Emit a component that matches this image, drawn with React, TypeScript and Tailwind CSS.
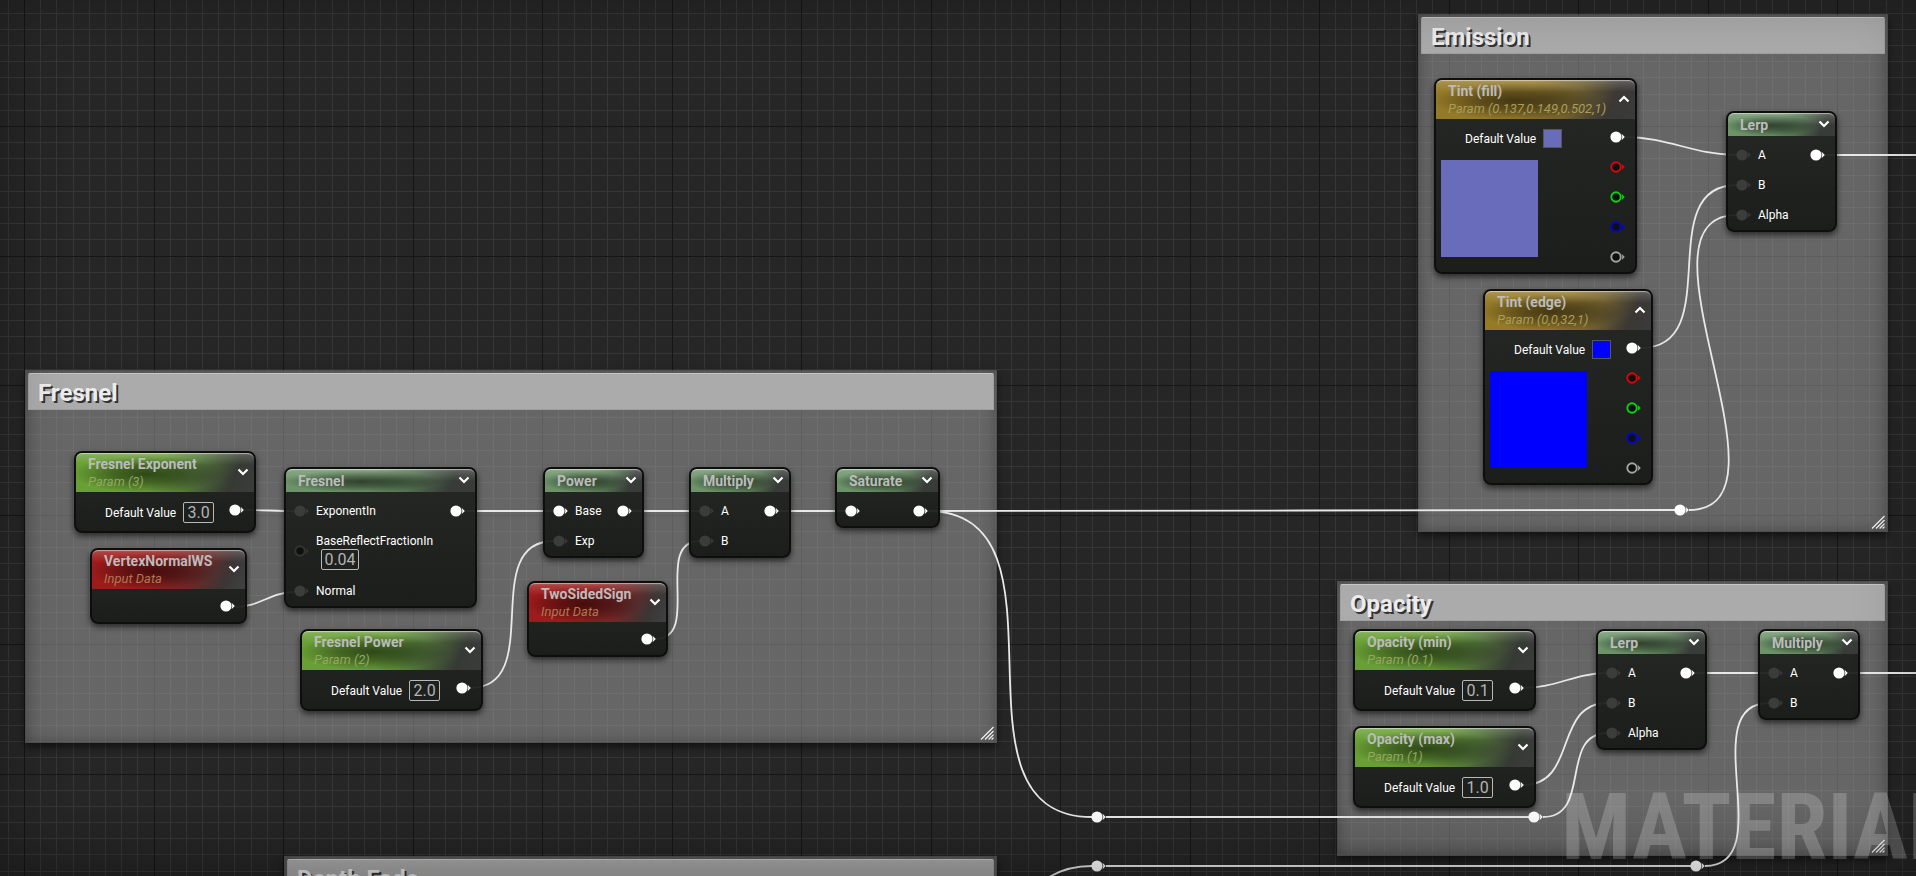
import React, { useId } from 'react';
import clsx from 'clsx';

type Tone = 'scalar' | 'vector' | 'input' | 'math';
type PinKind = 'linked' | 'dim' | 'empty' | 'red' | 'green' | 'blue' | 'alpha';

const HEADER_TONES: Record<Tone, string> = {
    scalar: 'bg-[linear-gradient(115deg,#69a033_0%,#689e36_45%,#527439_65%,#363a34_86%,#3a3c3b_100%)]',
    vector: 'bg-[linear-gradient(115deg,#957a26_0%,#95792a_45%,#71602e_67%,#3b3834_86%,#3a3b3c_100%)]',
    input: 'bg-[linear-gradient(115deg,#a01b1b_0%,#9c1c1c_42%,#742625_64%,#3c3535_86%,#3f4242_100%)]',
    math: 'bg-[linear-gradient(115deg,#6d946a_0%,#6a9165_45%,#52704f_66%,#383c38_86%,#393b39_100%)]',
};

const SUBTITLE_TONES: Record<Tone, string> = {
    scalar: 'text-[#94a760]',
    vector: 'text-[#aa9d58]',
    input: 'text-[#ad7954]',
    math: 'text-neutral-400',
};

const PIN_COLORS: Record<PinKind, string> = {
    linked: '#ffffff',
    dim: '#3b3c3b',
    empty: '#333433',
    red: '#e00505',
    green: '#05d808',
    blue: '#0505d2',
    alpha: '#a3a3a3',
};

const Pin: React.FC<{ kind: PinKind }> = ({ kind }) => {
    const color = PIN_COLORS[kind];
    const filled = kind === 'linked' || kind === 'dim';

    return (
        <svg width="15" height="12" viewBox="0 0 15 12" className="shrink-0" aria-hidden="true">
            <path d="M11.6 2.8 L14.8 6 L11.6 9.2 Q13 6 11.6 2.8 Z" fill={color} />
            {filled ? (
                <circle cx="6" cy="6" r="5.6" fill={color} />
            ) : (
                <circle cx="6" cy="6" r="4.7" fill="#0f0f0f" stroke={color} strokeWidth="1.9" />
            )}
        </svg>
    );
};

const Chevron: React.FC<{ up?: boolean }> = ({ up }) => (
    <svg width="12" height="8" viewBox="0 0 12 8" fill="none" stroke="#ffffff" strokeWidth="2.2" aria-hidden="true">
        <path d={up ? 'M1.5 6.5 L6 2 L10.5 6.5' : 'M1.5 1.5 L6 6 L10.5 1.5'} />
    </svg>
);

interface NodeProps {
    title: string;
    subtitle?: string;
    tone: Tone;
    place: string;
    expanded?: boolean;
    children: React.ReactNode;
}

const GraphNode: React.FC<NodeProps> = ({ title, subtitle, tone, place, expanded, children }) => (
    <section
        className={clsx(
            'absolute rounded-lg border-2 border-[#0d0e0d] bg-linear-to-b from-[#222422]/94 to-[#171916]/94 shadow-[0_3px_6px_rgba(0,0,0,0.6)]',
            place
        )}
    >
        <header
            className={clsx(
                'relative flex items-center justify-between overflow-hidden rounded-t-md pl-3 pr-[5px] shadow-[inset_0_2px_1px_-1px_rgba(255,255,255,0.5)]',
                subtitle ? 'h-[39px]' : 'h-[23px]',
                HEADER_TONES[tone]
            )}
        >
            {/* Soft dark pool behind the title */}
            <div className="absolute inset-0 bg-[radial-gradient(ellipse_42%_48%_at_40%_54%,rgba(0,0,0,0.55),rgba(0,0,0,0.36)_45%,transparent)]" />
            <div className="absolute inset-x-0 top-0 h-3 rounded-t-md bg-linear-to-b from-white/20 to-transparent" />
            <div className="relative whitespace-nowrap">
                <h3 className="text-sm leading-4 font-bold text-[#bcbcbc]">{title}</h3>
                {subtitle && <p className={clsx('pt-0.5 text-[13px] leading-4 italic', SUBTITLE_TONES[tone])}>{subtitle}</p>}
            </div>
            <button type="button" aria-label={`Toggle ${title}`} className="relative shrink-0 pb-0.5">
                <Chevron up={expanded} />
            </button>
        </header>
        {children}
    </section>
);

interface PinRow {
    label?: string;
    kind: PinKind;
    value?: string;
}

const ValueInput: React.FC<{ id: string; value: string; wide?: boolean }> = ({ id, value, wide }) => (
    <input
        id={id}
        type="text"
        defaultValue={value}
        className={clsx(
            'h-[21px] rounded-xs border border-[#b8b8b8] bg-transparent text-center text-base leading-4 text-[#b4b4b4] outline-none',
            wide ? 'w-[38px]' : 'w-[31px]'
        )}
    />
);

const MathNode: React.FC<{ title: string; place: string; inputs: PinRow[] }> = ({ title, place, inputs }) => {
    const id = useId();

    return (
        <GraphNode title={title} tone="math" place={place}>
            <div className="flex justify-between pt-1 pr-2.5 pl-2">
                <ul>
                    {inputs.map((row, i) => (
                        <li key={i} className={clsx('flex items-center gap-[7px]', row.value ? 'h-[50px]' : 'h-[30px]')}>
                            <Pin kind={row.kind} />
                            {row.value ? (
                                <div className="flex flex-col">
                                    <label htmlFor={id} className="text-xs leading-4">{row.label}</label>
                                    <div className="flex pl-[5px]">
                                        <ValueInput id={id} value={row.value} wide />
                                    </div>
                                </div>
                            ) : (
                                row.label && <span className="text-xs leading-4">{row.label}</span>
                            )}
                        </li>
                    ))}
                </ul>
                <div className="flex h-[30px] items-center">
                    <Pin kind="linked" />
                </div>
            </div>
        </GraphNode>
    );
};

const ScalarNode: React.FC<{ title: string; subtitle: string; value: string; place: string }> = ({ title, subtitle, value, place }) => {
    const id = useId();

    return (
        <GraphNode title={title} subtitle={subtitle} tone="scalar" place={place}>
            <div className="flex items-start pt-2.5 pr-2.5 pb-2 pl-[29px]">
                <div className="flex items-center gap-[7px]">
                    <label htmlFor={id} className="text-xs leading-4 whitespace-nowrap">Default Value</label>
                    <ValueInput id={id} value={value} />
                </div>
                <div className="ml-auto pt-0.5">
                    <Pin kind="linked" />
                </div>
            </div>
        </GraphNode>
    );
};

const InputDataNode: React.FC<{ title: string; place: string }> = ({ title, place }) => (
    <GraphNode title={title} subtitle="Input Data" tone="input" place={place}>
        <div className="flex justify-end pt-[11px] pr-2.5 pb-2.5">
            <Pin kind="linked" />
        </div>
    </GraphNode>
);

const CHANNELS: PinKind[] = ['linked', 'red', 'green', 'blue', 'alpha'];

const VectorNode: React.FC<{ title: string; subtitle: string; color: string; place: string }> = ({ title, subtitle, color, place }) => (
    <GraphNode title={title} subtitle={subtitle} tone="vector" place={place} expanded>
        <div className="flex justify-between pr-2.5 pb-[9px] pl-[5px]">
            <div>
                <div className="flex items-center gap-[7px] pt-2.5 pl-6">
                    <span className="text-xs leading-4">Default Value</span>
                    <button
                        type="button"
                        aria-label={`${title} colour`}
                        className={clsx('size-[19px] border border-[#575757]', color)}
                    />
                </div>
                <div className={clsx('mt-3 size-[97px]', color)} />
            </div>
            <div className="flex flex-col gap-[18px] pt-3">
                {CHANNELS.map((kind) => (
                    <div key={kind} className="flex h-3">
                        <Pin kind={kind} />
                    </div>
                ))}
            </div>
        </div>
    </GraphNode>
);

const CommentBox: React.FC<{ title: string; place: string }> = ({ title, place }) => (
    <section
        className={clsx(
            'absolute flex flex-col justify-between border border-[#505050] bg-[#a6a6a6]/50 px-0.5 pt-0.5 pb-0.5 shadow-[inset_0_0_14px_rgba(0,0,0,0.3),0_4px_8px_rgba(0,0,0,0.55)]',
            place
        )}
    >
        <h2 className="rounded-t-xs border border-[#a0a0a0] border-t-[#c6c6c6] bg-[#ababab] px-[9px] pt-[5px] pb-px text-2xl leading-[29px] font-bold text-[#ececec] [text-shadow:2px_2px_0_#333]">
            {title}
        </h2>
        <svg width="14" height="14" viewBox="0 0 14 14" className="self-end" stroke="#f0f0f0" strokeWidth="1.3" aria-hidden="true">
            <path d="M1 13.5 L13.5 1 M5 13.5 L13.5 5 M8.6 13.5 L13.5 8.6 M11.6 13.5 L13.5 11.6" />
        </svg>
    </section>
);

// Minor lines every 1/8 of a major cell
const MAJOR = 129.5;
const MINOR = MAJOR / 8;
const GRID_X = 24;
const GRID_Y = 126;

const gridLine = (origin: number, index: number) => Math.round(origin + index * MINOR);

const Grid = () => {
    const steps = Array.from({ length: 250 }, (_, i) => i - 8);
    const minor = steps.filter((i) => i % 8 !== 0);
    const major = steps.filter((i) => i % 8 === 0);
    const toPath = (list: number[]) =>
        list.map((i) => `M${gridLine(GRID_X, i) + 0.5} 0V3000M0 ${gridLine(GRID_Y, i) + 0.5}H4000`).join('');

    return (
        <svg className="absolute inset-0 h-full w-full" shapeRendering="crispEdges" fill="none" aria-hidden="true">
            <path d={toPath(minor)} stroke="#363636" />
            <path d={toPath(major)} stroke="#161616" />
        </svg>
    );
};

type Wire = [number, number, number, number];

const WIRES: Wire[] = [
    [244, 510, 295, 511],
    [235, 607, 295, 592],
    [465, 511, 554, 511],
    [470, 688, 554, 541],
    [632, 511, 700, 511],
    [655, 639, 700, 541],
    [778, 511, 846, 511],
    [927, 511, 1675, 510],
    [927, 511, 1092, 817],
    [1106, 817, 1530, 817],
    [1543, 817, 1608, 733],
    [920, 1000, 1092, 866],
    [1106, 866, 1691, 866],
    [1705, 866, 1769, 703],
    [1689, 510, 1737, 215],
    [1625, 137, 1737, 155],
    [1641, 348, 1737, 185],
    [1825, 155, 2300, 155],
    [1523, 688, 1608, 673],
    [1523, 785, 1608, 703],
    [1695, 673, 1769, 673],
    [1848, 673, 2300, 673],
];

// Horizontal tangents grow with the distance between both ends
const wirePath = ([x1, y1, x2, y2]: Wire) => {
    const reach = (Math.abs(x2 - x1) + Math.abs(y2 - y1)) / 3;
    return `M${x1} ${y1}C${x1 + reach} ${y1} ${x2 - reach} ${y2} ${x2} ${y2}`;
};

const Wires = () => (
    <svg className="absolute inset-0 h-full w-full" fill="none" stroke="#e9e9e9" strokeWidth="1.8" aria-hidden="true">
        {WIRES.map((wire, i) => (
            <path key={i} d={wirePath(wire)} />
        ))}
    </svg>
);

const Reroute: React.FC<{ place: string }> = ({ place }) => (
    <div className={clsx('absolute flex', place)}>
        <Pin kind="linked" />
    </div>
);

export default function App() {
    return (
        <main className="relative h-screen overflow-hidden bg-[#262626] font-['Roboto','Liberation_Sans',sans-serif] text-white">
            <Grid />

            {/* Comment boxes */}
            <CommentBox title="Fresnel" place="left-[25px] top-[370px] h-[373px] w-[972px]" />
            <CommentBox title="Emission" place="left-[1418px] top-[14px] h-[518px] w-[470px]" />
            <CommentBox title="Opacity" place="left-[1337px] top-[581px] h-[275px] w-[551px]" />
            <CommentBox title="Depth Fade" place="left-[284px] top-[856px] h-[373px] w-[713px]" />

            <Wires />

            {/* Fresnel */}
            <ScalarNode title="Fresnel Exponent" subtitle="Param (3)" value="3.0" place="left-[74px] top-[451px] w-[182px]" />
            <InputDataNode title="VertexNormalWS" place="left-[90px] top-[548px] w-[157px]" />
            <MathNode
                title="Fresnel"
                place="left-[284px] top-[467px] w-[193px]"
                inputs={[
                    { label: 'ExponentIn', kind: 'dim' },
                    { label: 'BaseReflectFractionIn', kind: 'empty', value: '0.04' },
                    { label: 'Normal', kind: 'dim' },
                ]}
            />
            <ScalarNode title="Fresnel Power" subtitle="Param (2)" value="2.0" place="left-[300px] top-[629px] w-[183px]" />
            <MathNode
                title="Power"
                place="left-[543px] top-[467px] w-[101px]"
                inputs={[{ label: 'Base', kind: 'linked' }, { label: 'Exp', kind: 'dim' }]}
            />
            <InputDataNode title="TwoSidedSign" place="left-[527px] top-[581px] w-[141px]" />
            <MathNode
                title="Multiply"
                place="left-[689px] top-[467px] w-[102px]"
                inputs={[{ label: 'A', kind: 'dim' }, { label: 'B', kind: 'dim' }]}
            />
            <MathNode title="Saturate" place="left-[835px] top-[467px] w-[105px]" inputs={[{ kind: 'linked' }]} />

            {/* Emission */}
            <VectorNode
                title="Tint (fill)"
                subtitle="Param (0.137,0.149,0.502,1)"
                color="bg-[#696cba]"
                place="left-[1434px] top-[78px] w-[203px]"
            />
            <VectorNode title="Tint (edge)" subtitle="Param (0,0,32,1)" color="bg-[#0000ff]" place="left-[1483px] top-[289px] w-[170px]" />
            <MathNode
                title="Lerp"
                place="left-[1726px] top-[111px] w-[111px]"
                inputs={[{ label: 'A', kind: 'dim' }, { label: 'B', kind: 'dim' }, { label: 'Alpha', kind: 'dim' }]}
            />

            {/* Opacity */}
            <ScalarNode title="Opacity (min)" subtitle="Param (0.1)" value="0.1" place="left-[1353px] top-[629px] w-[183px]" />
            <ScalarNode title="Opacity (max)" subtitle="Param (1)" value="1.0" place="left-[1353px] top-[726px] w-[183px]" />
            <MathNode
                title="Lerp"
                place="left-[1596px] top-[629px] w-[111px]"
                inputs={[{ label: 'A', kind: 'dim' }, { label: 'B', kind: 'dim' }, { label: 'Alpha', kind: 'dim' }]}
            />
            <MathNode
                title="Multiply"
                place="left-[1758px] top-[629px] w-[102px]"
                inputs={[{ label: 'A', kind: 'dim' }, { label: 'B', kind: 'dim' }]}
            />

            {/* Reroute knots */}
            <Reroute place="left-[1674px] top-[504px]" />
            <Reroute place="left-[1091px] top-[811px]" />
            <Reroute place="left-[1528px] top-[811px]" />
            <Reroute place="left-[1091px] top-[860px]" />
            <Reroute place="left-[1690px] top-[860px]" />

            {/* Edge shading and watermark */}
            <div className="pointer-events-none absolute inset-0 shadow-[inset_0_0_60px_rgba(0,0,0,0.25)]" />
            <div className="pointer-events-none absolute inset-x-0 bottom-0 h-20 bg-linear-to-t from-black/12 to-transparent" />
            <p className="pointer-events-none absolute -right-9 bottom-0.5 font-['Roboto_Condensed','Roboto',sans-serif] text-[92px] leading-none font-bold whitespace-nowrap text-white/20">
                MATERIAL
            </p>
        </main>
    );
}
